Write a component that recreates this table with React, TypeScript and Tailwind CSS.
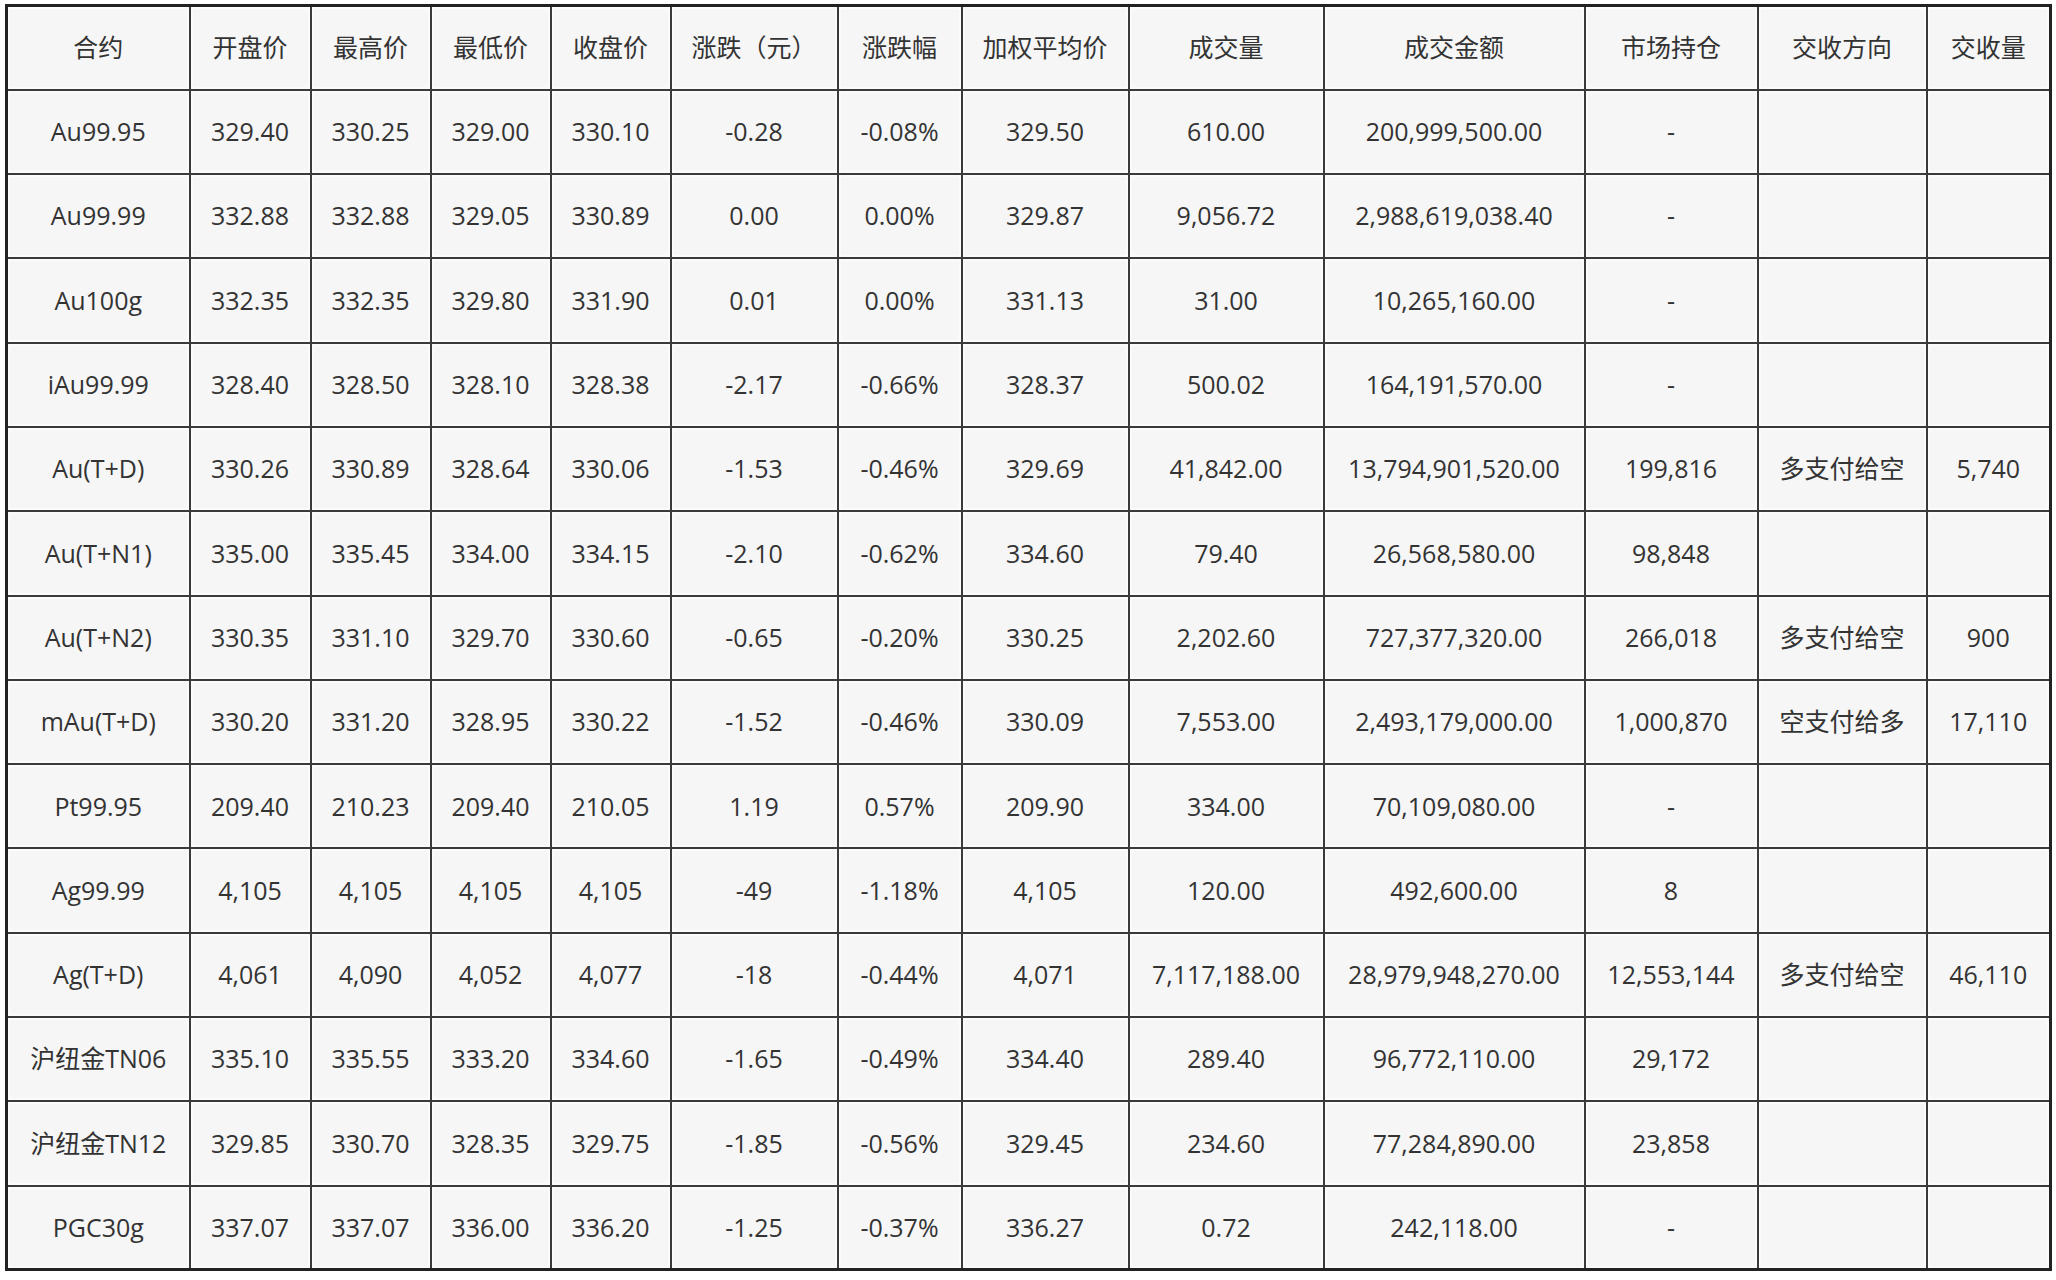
import React from "react";

const headers = ["合约", "开盘价", "最高价", "最低价", "收盘价", "涨跌（元）", "涨跌幅", "加权平均价", "成交量", "成交金额", "市场持仓", "交收方向", "交收量"];

const rows: string[][] = [
  ["Au99.95", "329.40", "330.25", "329.00", "330.10", "-0.28", "-0.08%", "329.50", "610.00", "200,999,500.00", "-", "", ""],
  ["Au99.99", "332.88", "332.88", "329.05", "330.89", "0.00", "0.00%", "329.87", "9,056.72", "2,988,619,038.40", "-", "", ""],
  ["Au100g", "332.35", "332.35", "329.80", "331.90", "0.01", "0.00%", "331.13", "31.00", "10,265,160.00", "-", "", ""],
  ["iAu99.99", "328.40", "328.50", "328.10", "328.38", "-2.17", "-0.66%", "328.37", "500.02", "164,191,570.00", "-", "", ""],
  ["Au(T+D)", "330.26", "330.89", "328.64", "330.06", "-1.53", "-0.46%", "329.69", "41,842.00", "13,794,901,520.00", "199,816", "多支付给空", "5,740"],
  ["Au(T+N1)", "335.00", "335.45", "334.00", "334.15", "-2.10", "-0.62%", "334.60", "79.40", "26,568,580.00", "98,848", "", ""],
  ["Au(T+N2)", "330.35", "331.10", "329.70", "330.60", "-0.65", "-0.20%", "330.25", "2,202.60", "727,377,320.00", "266,018", "多支付给空", "900"],
  ["mAu(T+D)", "330.20", "331.20", "328.95", "330.22", "-1.52", "-0.46%", "330.09", "7,553.00", "2,493,179,000.00", "1,000,870", "空支付给多", "17,110"],
  ["Pt99.95", "209.40", "210.23", "209.40", "210.05", "1.19", "0.57%", "209.90", "334.00", "70,109,080.00", "-", "", ""],
  ["Ag99.99", "4,105", "4,105", "4,105", "4,105", "-49", "-1.18%", "4,105", "120.00", "492,600.00", "8", "", ""],
  ["Ag(T+D)", "4,061", "4,090", "4,052", "4,077", "-18", "-0.44%", "4,071", "7,117,188.00", "28,979,948,270.00", "12,553,144", "多支付给空", "46,110"],
  ["沪纽金TN06", "335.10", "335.55", "333.20", "334.60", "-1.65", "-0.49%", "334.40", "289.40", "96,772,110.00", "29,172", "", ""],
  ["沪纽金TN12", "329.85", "330.70", "328.35", "329.75", "-1.85", "-0.56%", "329.45", "234.60", "77,284,890.00", "23,858", "", ""],
  ["PGC30g", "337.07", "337.07", "336.00", "336.20", "-1.25", "-0.37%", "336.27", "0.72", "242,118.00", "-", "", ""],
];

const widths = [183, 121, 120, 120, 120, 167, 124, 167, 195, 261, 173, 169, 124];

export default function App() {
  return (
    <div className="w-[2056px] h-[1280px] bg-white pt-[4px] pl-[5px]" style={{ fontFamily: '"Open Sans", "Noto Sans CJK SC", sans-serif' }}>
      <table className="table-fixed border-collapse border-[3px] border-[#222] bg-[#f6f6f6] text-[#333] text-[25px] w-[2047px]">
        <colgroup>
          {widths.map((w, i) => (
            <col key={i} style={{ width: w }} />
          ))}
        </colgroup>
        <thead>
          <tr>
            {headers.map((h, i) => (
              <th key={i} className="h-[84.3px] border-2 border-[#3a3a3a] font-normal text-center align-middle p-0 shadow-[inset_0_0_0_2px_#fbfbfb]">
                {h}
              </th>
            ))}
          </tr>
        </thead>
        <tbody>
          {rows.map((r, ri) => (
            <tr key={ri}>
              {r.map((c, ci) => (
                <td key={ci} className="h-[84.3px] border-2 border-[#3a3a3a] text-center align-middle p-0 whitespace-nowrap shadow-[inset_0_0_0_2px_#fbfbfb]">
                  {c}
                </td>
              ))}
            </tr>
          ))}
        </tbody>
      </table>
    </div>
  );
}
